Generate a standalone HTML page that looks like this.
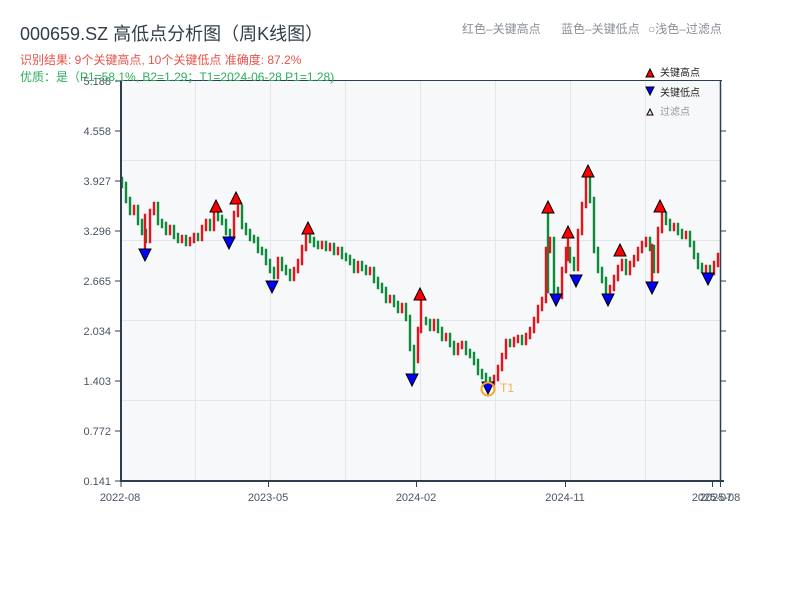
<!DOCTYPE html>
<html><head><meta charset="utf-8"><style>
body{margin:0;background:#fff;width:800px;height:600px;overflow:hidden;font-family:"Liberation Sans","Noto Sans CJK SC",sans-serif}
svg text{font-family:"Liberation Sans","Noto Sans CJK SC",sans-serif}
</style></head><body>
<svg width="800" height="600" xmlns="http://www.w3.org/2000/svg">
<rect x="121" y="80" width="599" height="401" fill="#f6f8fa"/>
<g stroke="#e2e5ea" stroke-width="1">
<line x1="195.5" y1="80" x2="195.5" y2="481"/><line x1="270.5" y1="80" x2="270.5" y2="481"/><line x1="345.5" y1="80" x2="345.5" y2="481"/><line x1="420.5" y1="80" x2="420.5" y2="481"/><line x1="495.5" y1="80" x2="495.5" y2="481"/><line x1="570.5" y1="80" x2="570.5" y2="481"/><line x1="645.5" y1="80" x2="645.5" y2="481"/>
<line x1="121" y1="160.5" x2="720" y2="160.5"/><line x1="121" y1="240.5" x2="720" y2="240.5"/><line x1="121" y1="320.5" x2="720" y2="320.5"/><line x1="121" y1="400.5" x2="720" y2="400.5"/>
</g>
<path stroke="#0d8a3a" stroke-width="2.4" stroke-linecap="square" fill="none" d="M122 178V187 M126 183V202 M130 198V214 M138 206V224 M142 220V234 M146 230V242 M158 203V224 M162 220V227 M166 223V234 M174 226V238 M178 234V242 M186 236V245 M198 234V240 M210 220V230 M218 210V220 M222 216V224 M226 220V234 M230 230V238 M242 206V228 M246 224V234 M250 230V240 M254 236V242 M258 238V252 M262 248V254 M266 250V264 M270 260V272 M274 268V278 M282 258V270 M286 266V274 M290 270V280 M310 236V242 M314 238V246 M318 242V248 M326 242V250 M334 244V254 M342 248V258 M346 254V260 M350 256V264 M354 260V272 M362 262V270 M366 266V274 M374 268V282 M378 278V288 M382 284V292 M386 288V302 M394 296V306 M398 302V312 M406 304V320 M410 316V350 M414 346V374 M426 318V324 M430 320V330 M438 320V332 M442 328V340 M450 334V346 M454 342V354 M466 342V354 M470 350V357 M474 353V364 M478 360V374 M482 370V378 M486 374V382 M490 378V384 M510 340V346 M522 336V344 M548 212V292 M554 238V292 M558 288V298 M570 248V262 M574 258V270 M590 178V202 M594 198V252 M598 248V272 M602 268V282 M606 278V294 M626 260V274 M650 238V250 M654 246V272 M666 213V224 M670 220V230 M678 224V234 M682 230V238 M690 232V246 M694 242V258 M698 254V268 M702 264V272 M710 266V274"/>
<path stroke="#e3141b" stroke-width="2.4" stroke-linecap="square" fill="none" d="M134 206V214 M145 215V250 M150 210V242 M154 203V214 M170 226V234 M182 236V242 M190 238V245 M194 234V242 M202 226V240 M206 220V230 M214 210V230 M234 212V238 M238 206V216 M278 258V278 M294 268V280 M298 260V272 M302 246V264 M306 236V250 M322 242V248 M330 244V250 M338 248V254 M358 262V272 M370 268V274 M390 296V302 M402 304V312 M418 328V362 M421 300V332 M434 320V330 M446 334V340 M458 344V354 M462 342V348 M494 376V384 M498 366V380 M502 354V370 M506 340V358 M514 338V346 M518 336V342 M526 334V344 M530 328V338 M534 318V332 M538 306V322 M542 298V310 M546 248V302 M550 238V252 M562 268V298 M566 248V272 M568 240V260 M578 230V270 M582 203V234 M586 178V207 M610 286V294 M614 276V290 M618 266V280 M622 260V270 M630 262V274 M634 256V266 M638 248V260 M642 242V252 M646 238V246 M652 245V282 M658 228V272 M662 213V232 M674 224V230 M686 232V238 M706 266V272 M714 262V274 M718 254V266"/>
<g stroke="#2c3e50" fill="none">
<line x1="121" y1="80.5" x2="722" y2="80.5" stroke-width="1"/>
<line x1="720.5" y1="80" x2="720.5" y2="481" stroke-width="1.5"/>
<line x1="121" y1="80" x2="121" y2="482" stroke-width="2"/>
<line x1="120" y1="481" x2="724" y2="481" stroke-width="2"/>
<g stroke-width="1">
<line x1="115" y1="81" x2="121" y2="81"/><line x1="115" y1="131" x2="121" y2="131"/><line x1="115" y1="181" x2="121" y2="181"/><line x1="115" y1="231" x2="121" y2="231"/><line x1="115" y1="281" x2="121" y2="281"/><line x1="115" y1="331" x2="121" y2="331"/><line x1="115" y1="381" x2="121" y2="381"/><line x1="115" y1="431" x2="121" y2="431"/><line x1="115" y1="481" x2="121" y2="481"/>
<line x1="720" y1="131" x2="726" y2="131"/><line x1="720" y1="181" x2="726" y2="181"/><line x1="720" y1="231" x2="726" y2="231"/><line x1="720" y1="281" x2="726" y2="281"/><line x1="720" y1="331" x2="726" y2="331"/><line x1="720" y1="381" x2="726" y2="381"/><line x1="720" y1="431" x2="726" y2="431"/>
<line x1="121" y1="481" x2="121" y2="487"/><line x1="268.5" y1="481" x2="268.5" y2="487"/><line x1="416.5" y1="481" x2="416.5" y2="487"/><line x1="565.5" y1="481" x2="565.5" y2="487"/><line x1="712.5" y1="481" x2="712.5" y2="487"/><line x1="720.5" y1="481" x2="720.5" y2="487"/>
</g></g>
<g font-size="11" fill="#4a5562" text-anchor="end">
<text x="111" y="85">5.188</text><text x="111" y="135">4.558</text><text x="111" y="185">3.927</text><text x="111" y="235">3.296</text><text x="111" y="285">2.665</text><text x="111" y="335">2.034</text><text x="111" y="385">1.403</text><text x="111" y="435">0.772</text><text x="111" y="485">0.141</text>
</g>
<g font-size="11" fill="#4a5562" text-anchor="middle">
<text x="120" y="501">2022-08</text><text x="268" y="501">2023-05</text><text x="416" y="501">2024-02</text><text x="565" y="501">2024-11</text><text x="712" y="501">2025-07</text><text x="720" y="501">2025-08</text>
</g>
<g stroke="#000" stroke-width="1" fill="#f00">
<polygon points="210,212 216,200 222,212"/><polygon points="230,204 236,192 242,204"/><polygon points="302,234 308,222 314,234"/><polygon points="414,300 420,288 426,300"/><polygon points="542,213 548,201 554,213"/><polygon points="562,238 568,226 574,238"/><polygon points="582,177 588,165 594,177"/><polygon points="614,256 620,244 626,256"/><polygon points="654,212 660,200 666,212"/>
</g>
<g stroke="#000" stroke-width="1" fill="#00f">
<polygon points="139,249 151,249 145,261"/><polygon points="223,237 235,237 229,249"/><polygon points="266,281 278,281 272,293"/><polygon points="406,374 418,374 412,386"/><polygon points="482,382 494,382 488,394"/><polygon points="550,294 562,294 556,306"/><polygon points="570,275 582,275 576,287"/><polygon points="602,294 614,294 608,306"/><polygon points="646,282 658,282 652,294"/><polygon points="702,273 714,273 708,285"/>
</g>
<circle cx="488" cy="389" r="6.5" fill="none" stroke="#f5a623" stroke-width="2"/>
<text x="500" y="392" font-size="12" fill="#f5b14a">T1</text>
<text x="20" y="40" font-size="18" fill="#333d4a">000659.SZ 高低点分析图（周K线图）</text>
<text x="20" y="64" font-size="12" fill="#e8534a">识别结果: 9个关键高点, 10个关键低点  准确度: 87.2%</text>
<text x="20" y="81" font-size="12" fill="#2aaf5a">优质：是（P1=58.1%, B2=1.29；T1=2024-06-28 P1=1.28)</text>
<text x="462" y="33" font-size="12" fill="#8a8f96">红色–关键高点</text>
<text x="561" y="33" font-size="12" fill="#8a8f96">蓝色–关键低点</text>
<text x="648" y="33" font-size="12" fill="#8a8f96">○浅色–过滤点</text>
<polygon points="646,77 650,69 654,77" fill="#f00" stroke="#000"/>
<text x="660" y="76" font-size="10" fill="#222">关键高点</text>
<polygon points="646,87 654,87 650,95" fill="#00f" stroke="#000"/>
<text x="660" y="96" font-size="10" fill="#222">关键低点</text>
<polygon points="647,115 650,109 653,115" fill="#fdd" stroke="#000"/>
<text x="660" y="115" font-size="10" fill="#999">过滤点</text>
</svg>
</body></html>
